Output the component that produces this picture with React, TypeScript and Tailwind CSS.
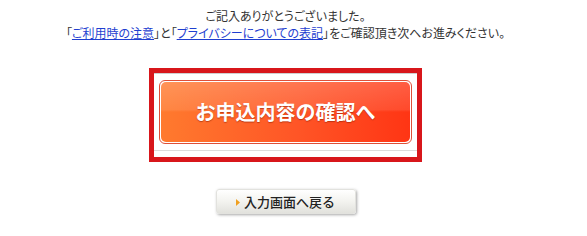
export default function App() {
  return (
    <div
      className="w-[571px] h-[236px] bg-white flex flex-col items-center text-[#333]"
      style={{ fontFamily: "'Noto Sans CJK JP', 'Noto Sans', sans-serif" }}
    >
      {/* Notice */}
      <div className="pt-[7px] text-[12px] leading-[17px] text-center [font-feature-settings:'palt']">
        <p>ご記入ありがとうございました。</p>
        <p>
          「<a href="#" className="text-[#1f3fd0] underline">ご利用時の注意</a>」と「
          <a href="#" className="text-[#1f3fd0] underline">プライバシーについての表記</a>
          」をご確認頂き次へお進みください。
        </p>
      </div>

      {/* Confirm button frame */}
      <div className="mt-[27px] w-[273px] border-[5px] border-[#d8161b] bg-white">
        <div className="border-t border-[#cfcfcf] px-[5px] pt-[6px]">
          <button className="w-[253px] h-[64px] rounded-[6px] border border-[#df4f38] p-px cursor-pointer">
            <span className="flex h-full w-full items-center justify-center rounded-[5px] bg-[image:linear-gradient(to_bottom,rgba(255,255,255,0.2)_0%,rgba(255,255,255,0.1)_46%,rgba(255,255,255,0)_50%),linear-gradient(to_right,#ff7a2e,#ff5526_55%,#ff3514)] text-white text-[20px] font-bold leading-none [text-shadow:0_1px_1px_rgba(140,30,0,0.55)]">
              お申込内容の確認へ
            </span>
          </button>
        </div>
        <div className="mt-[6px] h-px bg-[#dcdcdc]" />
        <div className="h-[6px]" />
      </div>

      {/* Back button */}
      <button className="mt-[27px] w-[140px] h-[25px] rounded-[3px] border border-[#e2e2de] bg-[linear-gradient(to_bottom,#ffffff,#f3f3ef_50%,#e2e2dd)] shadow-[1px_1px_3px_rgba(0,0,0,0.35)] flex items-center justify-center gap-[4px] text-[13px] font-medium text-[#222] cursor-pointer">
        <svg width="4" height="7" viewBox="0 0 4 7" className="mt-px">
          <path d="M0 0 L4 3.5 L0 7 Z" fill="#f0a020" />
        </svg>
        <span>入力画面へ戻る</span>
      </button>
    </div>
  );
}
